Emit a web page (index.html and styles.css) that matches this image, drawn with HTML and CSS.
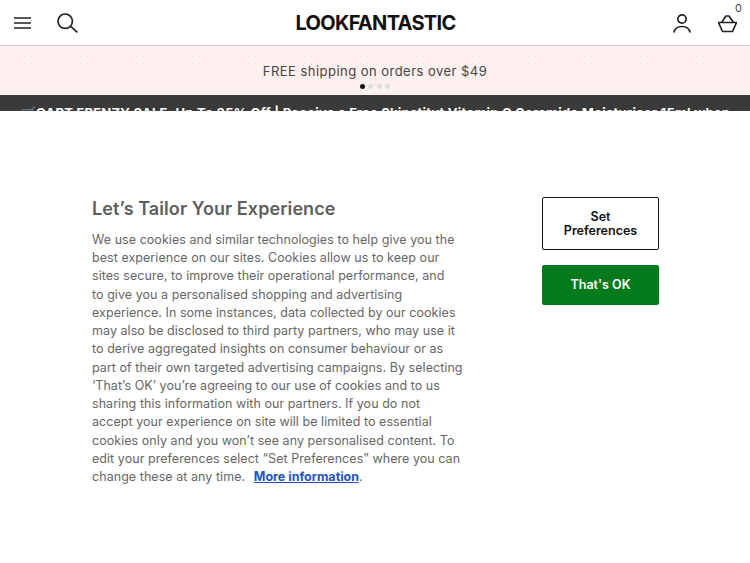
FILE: index.html
```html
<!DOCTYPE html>
<html lang="en">
<head>
  <meta charset="UTF-8" />
  <meta name="viewport" content="width=device-width, initial-scale=1.0"/>
  <title>LOOKFANTASTIC</title>
  <link rel="stylesheet" href="styles.css">
</head>
<body>
<header class="site-header">
  <div class="header-left">
    <button class="icon-btn" aria-label="Menu">
      <svg width="17" height="12" viewBox="0 0 17 12"><path d="M0 1h17M0 6h17M0 11h17" stroke="#222" stroke-width="1.6" fill="none"/></svg>
    </button>
    <button class="icon-btn" aria-label="Search">
      <svg width="21" height="20" viewBox="0 0 21 20" fill="none" stroke="#222" stroke-width="1.7"><circle cx="8.200" cy="8.200" r="7.200"/><path d="M13.600 13.400l6.800 6"/></svg>
    </button>
  </div>
  <div class="logo">LOOKFANTASTIC</div>
  <div class="header-right">
    <button class="icon-btn" aria-label="Account">
      <svg width="18" height="19" viewBox="0 0 18 19" fill="none" stroke="#222" stroke-width="1.7"><circle cx="9" cy="5" r="4.200"/><path d="M1 18.500c.6-4 3.800-6 8-6s7.400 2 8 6"/></svg>
    </button>
    <button class="icon-btn basket" aria-label="Basket">
      <svg width="19" height="18" viewBox="0 0 19 18" fill="none" stroke="#222" stroke-width="1.7" stroke-linejoin="round"><path d="M.5 7.500h18l-4 9h-10zM3.500 7.500L8 1h3l4.500 6.500"/></svg>
      <span class="basket-count">0</span>
    </button>
  </div>
</header>

<div class="promo">
  <p>FREE shipping on orders over $49</p>
  <div class="dots"><span class="dot on"></span><span class="dot"></span><span class="dot"></span><span class="dot"></span></div>
</div>

<div class="sale-bar">
  <p>🛒CART FRENZY SALE: Up To 35% Off | Receive a Free Skinstitut Vitamin C Ceramide Moisturiser 15ml when</p>
</div>

<section class="cookies">
  <div class="cookies-text">
    <h2>Let’s Tailor Your Experience</h2>
    <p>We use cookies and similar technologies to help give you the<br>
    best experience on our sites. Cookies allow us to keep our<br>
    sites secure, to improve their operational performance, and<br>
    to give you a personalised shopping and advertising<br>
    experience. In some instances, data collected by our cookies<br>
    may also be disclosed to third party partners, who may use it<br>
    to derive aggregated insights on consumer behaviour or as<br>
    part of their own targeted advertising campaigns. By selecting<br>
    ‘That’s OK’ you’re agreeing to our use of cookies and to us<br>
    sharing this information with our partners. If you do not<br>
    accept your experience on site will be limited to essential<br>
    cookies only and you won’t see any personalised content. To<br>
    edit your preferences select “Set Preferences” where you can<br>
    change these at any time. <a href="#">More information</a>.</p>
  </div>
  <div class="cookies-actions">
    <button class="btn btn-outline">Set Preferences</button>
    <button class="btn btn-green">That's OK</button>
  </div>
</section>
</body>
</html>
```

FILE: styles.css
```css
html, body { height: 100%; }
body { margin: 0; background: #fff; font-family: Inter, sans-serif; color: #333; overflow: hidden; }
p { margin: 0; }
button { background: none; border: none; padding: 0; font-family: inherit; cursor: pointer; }

.site-header { display: flex; align-items: center; justify-content: space-between; height: 45px; padding: 0 13px 0 14px; border-bottom: 1px solid #ccc; }
.header-left { display: flex; align-items: center; gap: 26px; width: 150px; }
.header-right { display: flex; align-items: center; justify-content: flex-end; gap: 27px; width: 150px; margin-top: 2px; }
.icon-btn { display: flex; align-items: center; }
.icon-btn svg { display: block; }
.basket { position: relative; }
.basket-count { position: absolute; top: -14px; right: -5px; font-size: 11px; color: #445; }
.logo { font-weight: 700; font-size: 20px; letter-spacing: -0.7px; color: #111; }

.promo { height: 49px; background-color: #fdf0ee; background-image: radial-gradient(#f3dfdd 0.6px, transparent 0.8px); background-size: 7px 7px; display: flex; flex-direction: column; align-items: center; padding-top: 17px; box-sizing: border-box; }
.promo p { font-size: 13px; line-height: 17px; letter-spacing: 0.47px; color: #444; }
.dots { display: flex; gap: 3.500px; margin-top: 4px; }
.dot { width: 5px; height: 5px; border-radius: 50%; background: #ddd; }
.dot.on { background: #111; }

.sale-bar { height: 16px; background: #3a3a3a; overflow: hidden; text-align: center; }
.sale-bar p { color: #fff; font-weight: 700; font-size: 13px; letter-spacing: 0.24px; line-height: 18px; padding-top: 9px; white-space: nowrap; }

.cookies { display: flex; justify-content: space-between; padding: 86px 91px 0 92px; }
.cookies-text { width: 380px; }
.cookies-text h2 { margin: 1px 0 11px; font-size: 18px; line-height: 22px; font-weight: 600; letter-spacing: 0.08px; color: #5e5e5e; }
.cookies-text p { font-size: 12.500px; line-height: 18.230px; letter-spacing: 0.05px; color: #666; white-space: nowrap; }
.cookies-text a { color: #2255bb; font-weight: 700; letter-spacing: 0; margin-left: 5px; }
.cookies-actions { display: flex; flex-direction: column; gap: 15px; width: 117px; }
.btn { width: 100%; border-radius: 2px; font-size: 12.500px; font-weight: 600; line-height: 14px; }
.btn-outline { height: 53px; background: #fff; border: 1px solid #111; color: #111; padding: 0 16px; }
.btn-green { height: 40px; background: #037b1d; color: #fff; }
```
